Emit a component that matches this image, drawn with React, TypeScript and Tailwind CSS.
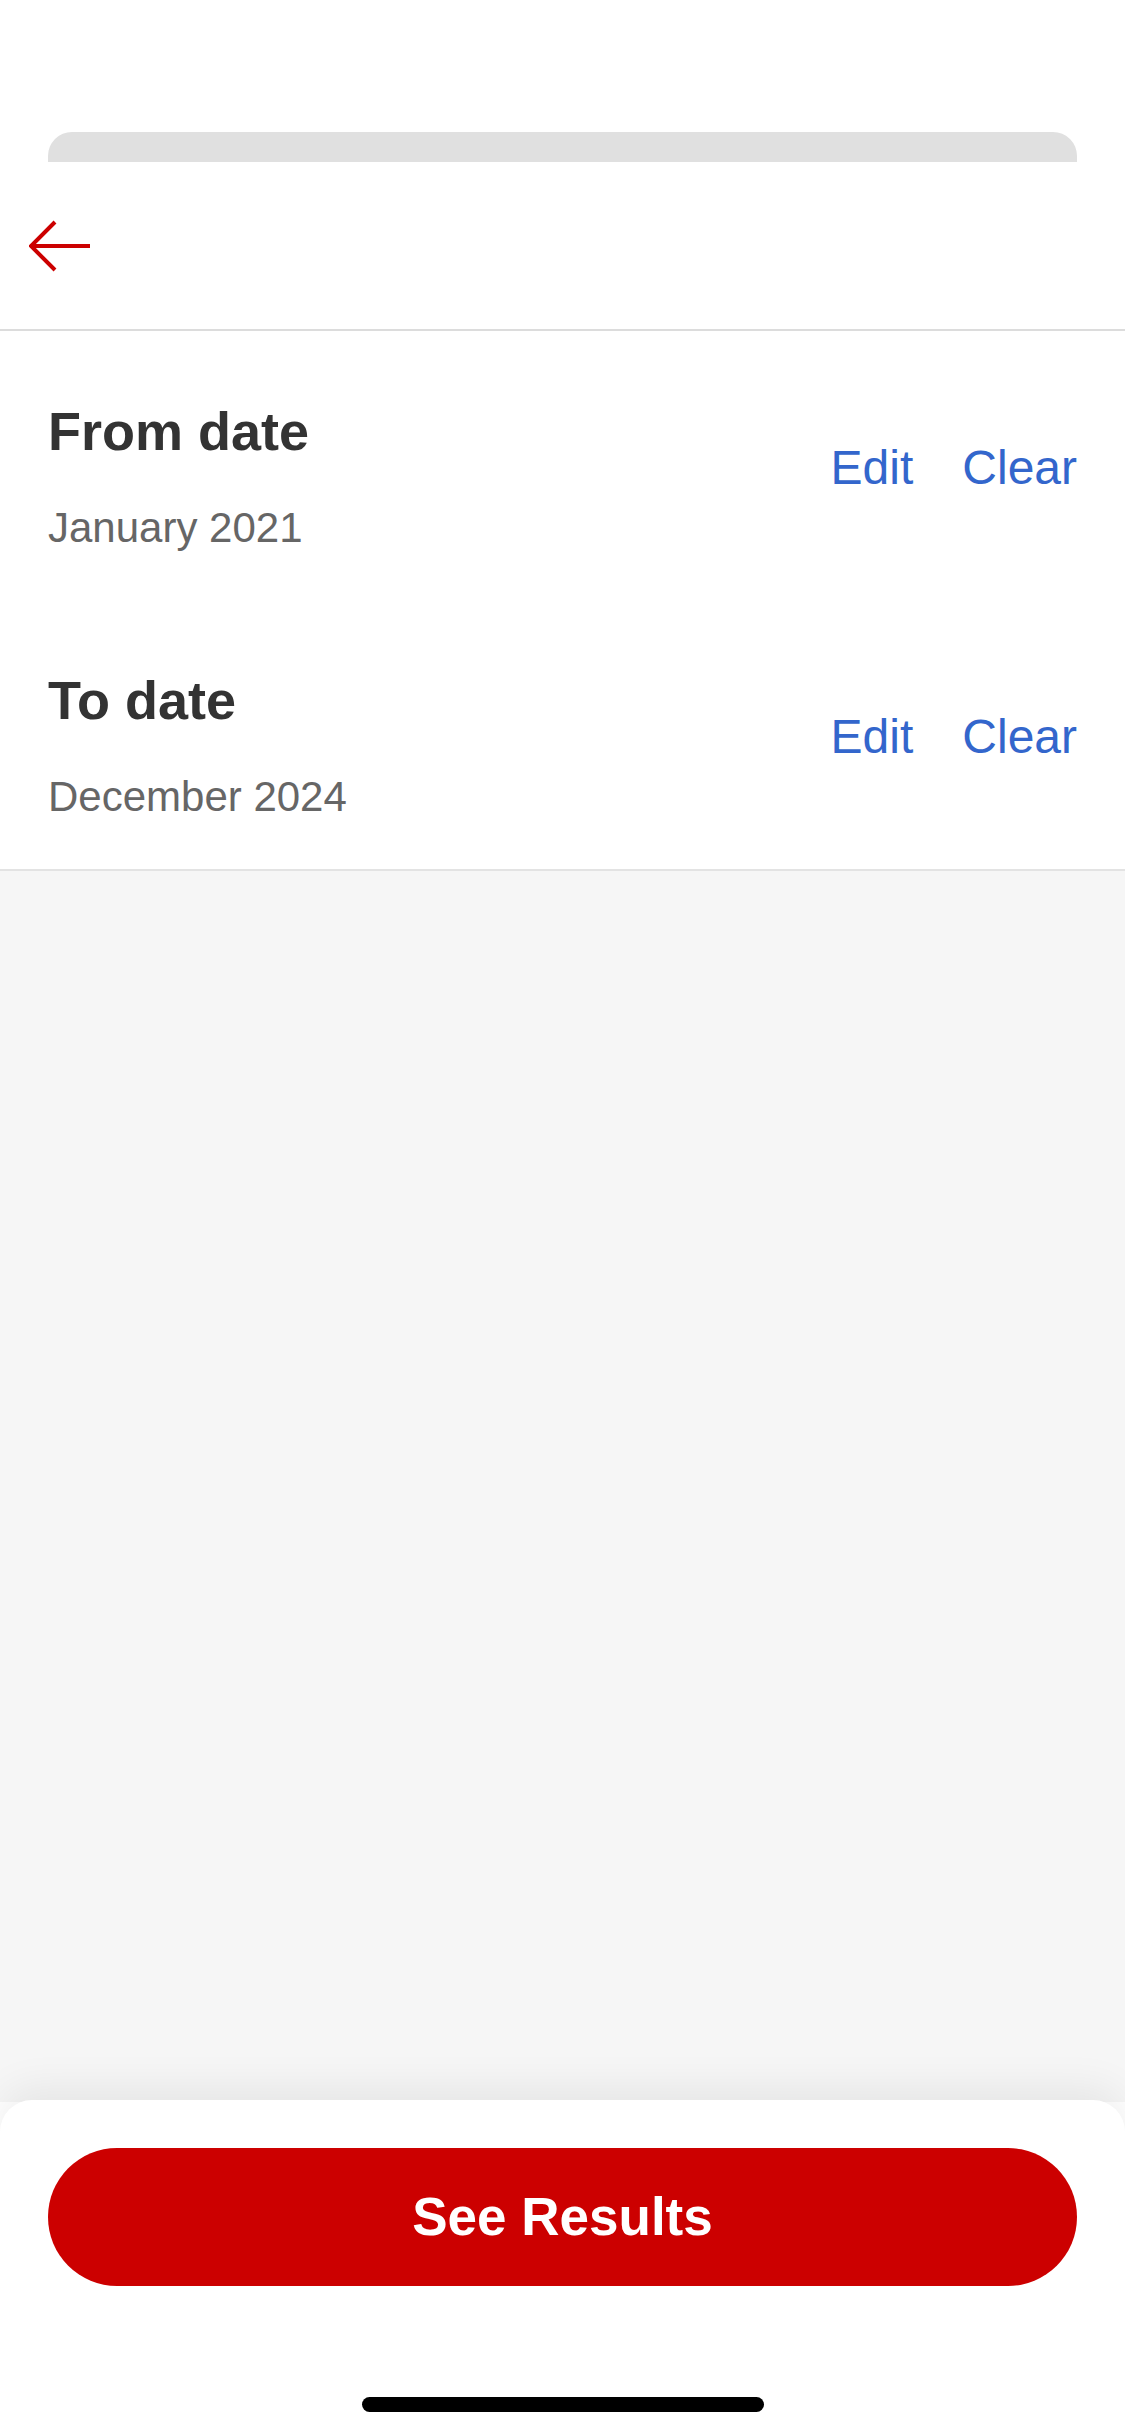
import React from "react";

const ranges = [
  { label: "From date", value: "January 2021" },
  { label: "To date", value: "December 2024" },
];

function BackArrow() {
  return (
    <svg width="62" height="52" viewBox="0 0 62 52" fill="none" stroke="#cc0000" strokeWidth={4}>
      <path d="M26 2 L2 26 L26 50" strokeLinejoin="miter" />
      <path d="M2 26 H61" />
    </svg>
  );
}

export default function App() {
  return (
    <div className="flex h-[2436px] w-[1125px] flex-col overflow-hidden bg-white font-['Liberation_Sans',Arial,sans-serif]">
      {/* status bar space */}
      <div className="h-[132px] shrink-0" />

      {/* sheet behind */}
      <div className="mx-[48px] h-[30px] shrink-0 rounded-t-[24px] bg-[#e0e0e0]" />

      {/* header */}
      <div className="flex h-[169px] shrink-0 items-center border-b-2 border-[#dcdcdc] pl-[29px]">
        <button aria-label="Back">
          <BackArrow />
        </button>
      </div>

      {/* date rows */}
      <div className="shrink-0 border-b-2 border-[#e3e3e3] bg-white">
        {ranges.map((r) => (
          <div key={r.label} className="flex h-[269px] items-start justify-between px-[48px] pt-[68px]">
            <div className="flex flex-col">
              <span className="text-[54px] font-bold leading-[64px] text-[#333333]">{r.label}</span>
              <span className="mt-[40px] text-[42px] leading-[50px] text-[#666666]">{r.value}</span>
            </div>
            <div className="mt-[41px] flex gap-[49px] text-[48px] leading-[56px] text-[#3366cc]">
              <button>Edit</button>
              <button>Clear</button>
            </div>
          </div>
        ))}
      </div>

      {/* empty area */}
      <div className="flex-1 bg-[#f6f6f6]" />

      {/* bottom action panel */}
      <div className="relative -mt-[2px] flex h-[336px] shrink-0 flex-col items-center rounded-t-[32px] bg-white px-[48px] pt-[48px] shadow-[0_-12px_40px_rgba(0,0,0,0.07)]">
        <button className="flex h-[138px] w-full items-center justify-center rounded-full bg-[#cc0000] text-[53px] font-bold text-white">
          See Results
        </button>
        <div className="mt-[111px] h-[15px] w-[402px] rounded-full bg-black" />
      </div>
    </div>
  );
}
